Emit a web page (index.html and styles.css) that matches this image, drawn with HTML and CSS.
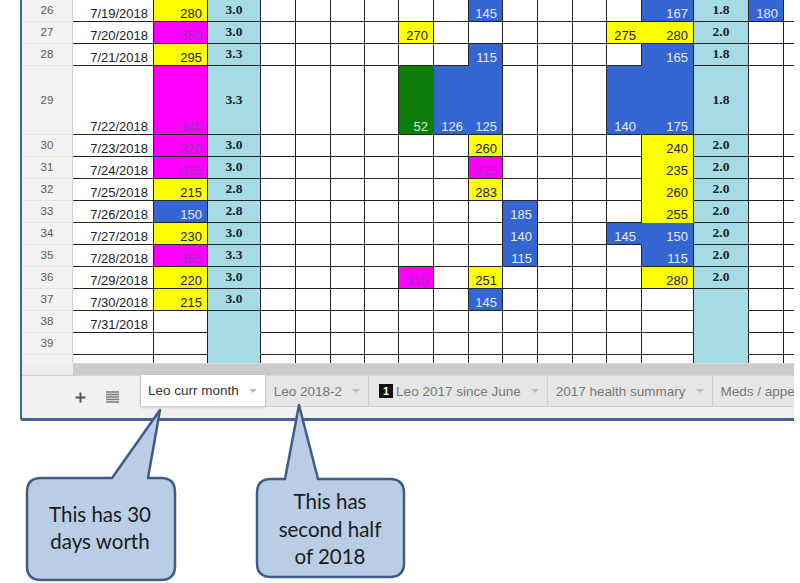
FILE: index.html
```html
<!DOCTYPE html>
<html lang="en">
<head>
    <meta charset="UTF-8">
    <meta name="viewport" content="width=device-width, initial-scale=1.0">
    <title>Leo curr month</title>
    <link rel="stylesheet" href="styles.css">
</head>
<body>
<div class="sheet">
    <div class="grid">
        <!-- 26 -->
        <div class="c h">26</div><div class="c">7/19/2018</div><div class="c y">280</div><div class="c lb">3.0</div>
        <div class="c"></div><div class="c"></div><div class="c"></div><div class="c"></div><div class="c"></div><div class="c"></div>
        <div class="c b">145</div><div class="c"></div><div class="c"></div><div class="c"></div><div class="c"></div>
        <div class="c b">167</div><div class="c lb">1.8</div><div class="c b">180</div><div class="c"></div>
        <!-- 27 -->
        <div class="c h">27</div><div class="c">7/20/2018</div><div class="c m">350</div><div class="c lb">3.0</div>
        <div class="c"></div><div class="c"></div><div class="c"></div><div class="c"></div><div class="c y">270</div><div class="c"></div>
        <div class="c"></div><div class="c"></div><div class="c"></div><div class="c"></div><div class="c y nr">275</div>
        <div class="c y">280</div><div class="c lb">2.0</div><div class="c"></div><div class="c"></div>
        <!-- 28 -->
        <div class="c h">28</div><div class="c">7/21/2018</div><div class="c y">295</div><div class="c lb">3.3</div>
        <div class="c"></div><div class="c"></div><div class="c"></div><div class="c"></div><div class="c"></div><div class="c"></div>
        <div class="c b nb">115</div><div class="c"></div><div class="c"></div><div class="c"></div><div class="c"></div>
        <div class="c b nb">165</div><div class="c lb">1.8</div><div class="c"></div><div class="c"></div>
        <!-- 29 -->
        <div class="c h">29</div><div class="c">7/22/2018</div><div class="c m">340</div><div class="c lb">3.3</div>
        <div class="c"></div><div class="c"></div><div class="c"></div><div class="c"></div><div class="c g nr">52</div><div class="c b nr">126</div>
        <div class="c b">125</div><div class="c"></div><div class="c"></div><div class="c"></div><div class="c b nr">140</div>
        <div class="c b">175</div><div class="c lb">1.8</div><div class="c"></div><div class="c"></div>
        <!-- 30 -->
        <div class="c h">30</div><div class="c">7/23/2018</div><div class="c m">320</div><div class="c lb">3.0</div>
        <div class="c"></div><div class="c"></div><div class="c"></div><div class="c"></div><div class="c"></div><div class="c"></div>
        <div class="c y">260</div><div class="c"></div><div class="c"></div><div class="c"></div><div class="c"></div>
        <div class="c y nb">240</div><div class="c lb">2.0</div><div class="c"></div><div class="c"></div>
        <!-- 31 -->
        <div class="c h">31</div><div class="c">7/24/2018</div><div class="c m">325</div><div class="c lb">3.0</div>
        <div class="c"></div><div class="c"></div><div class="c"></div><div class="c"></div><div class="c"></div><div class="c"></div>
        <div class="c m">325</div><div class="c"></div><div class="c"></div><div class="c"></div><div class="c"></div>
        <div class="c y nb">235</div><div class="c lb">2.0</div><div class="c"></div><div class="c"></div>
        <!-- 32 -->
        <div class="c h">32</div><div class="c">7/25/2018</div><div class="c y">215</div><div class="c lb">2.8</div>
        <div class="c"></div><div class="c"></div><div class="c"></div><div class="c"></div><div class="c"></div><div class="c"></div>
        <div class="c y">283</div><div class="c"></div><div class="c"></div><div class="c"></div><div class="c"></div>
        <div class="c y nb">260</div><div class="c lb">2.0</div><div class="c"></div><div class="c"></div>
        <!-- 33 -->
        <div class="c h">33</div><div class="c">7/26/2018</div><div class="c b">150</div><div class="c lb">2.8</div>
        <div class="c"></div><div class="c"></div><div class="c"></div><div class="c"></div><div class="c"></div><div class="c"></div>
        <div class="c"></div><div class="c b nb">185</div><div class="c"></div><div class="c"></div><div class="c"></div>
        <div class="c y nb">255</div><div class="c lb">2.0</div><div class="c"></div><div class="c"></div>
        <!-- 34 -->
        <div class="c h">34</div><div class="c">7/27/2018</div><div class="c y">230</div><div class="c lb">3.0</div>
        <div class="c"></div><div class="c"></div><div class="c"></div><div class="c"></div><div class="c"></div><div class="c"></div>
        <div class="c"></div><div class="c b nb">140</div><div class="c"></div><div class="c"></div><div class="c b nr">145</div>
        <div class="c b nb">150</div><div class="c lb">2.0</div><div class="c"></div><div class="c"></div>
        <!-- 35 -->
        <div class="c h">35</div><div class="c">7/28/2018</div><div class="c m">365</div><div class="c lb">3.3</div>
        <div class="c"></div><div class="c"></div><div class="c"></div><div class="c"></div><div class="c"></div><div class="c"></div>
        <div class="c"></div><div class="c b">115</div><div class="c"></div><div class="c"></div><div class="c"></div>
        <div class="c b">115</div><div class="c lb">2.0</div><div class="c"></div><div class="c"></div>
        <!-- 36 -->
        <div class="c h">36</div><div class="c">7/29/2018</div><div class="c y">220</div><div class="c lb">3.0</div>
        <div class="c"></div><div class="c"></div><div class="c"></div><div class="c"></div><div class="c m">310</div><div class="c"></div>
        <div class="c y">251</div><div class="c"></div><div class="c"></div><div class="c"></div><div class="c"></div>
        <div class="c y">280</div><div class="c lb">2.0</div><div class="c"></div><div class="c"></div>
        <!-- 37 -->
        <div class="c h">37</div><div class="c">7/30/2018</div><div class="c y">215</div><div class="c lb">3.0</div>
        <div class="c"></div><div class="c"></div><div class="c"></div><div class="c"></div><div class="c"></div><div class="c"></div>
        <div class="c b">145</div><div class="c"></div><div class="c"></div><div class="c"></div><div class="c"></div>
        <div class="c"></div><div class="c lb open"></div><div class="c"></div><div class="c"></div>
        <!-- 38 -->
        <div class="c h">38</div><div class="c">7/31/2018</div><div class="c"></div><div class="c lb open"></div>
        <div class="c"></div><div class="c"></div><div class="c"></div><div class="c"></div><div class="c"></div><div class="c"></div>
        <div class="c"></div><div class="c"></div><div class="c"></div><div class="c"></div><div class="c"></div>
        <div class="c"></div><div class="c lb open"></div><div class="c"></div><div class="c"></div>
        <!-- 39 -->
        <div class="c h">39</div><div class="c"></div><div class="c"></div><div class="c lb open"></div>
        <div class="c"></div><div class="c"></div><div class="c"></div><div class="c"></div><div class="c"></div><div class="c"></div>
        <div class="c"></div><div class="c"></div><div class="c"></div><div class="c"></div><div class="c"></div>
        <div class="c"></div><div class="c lb open"></div><div class="c"></div><div class="c"></div>
        <!-- 40, cut off by the scrollbar -->
        <div class="c h"></div><div class="c"></div><div class="c"></div><div class="c lb"></div>
        <div class="c"></div><div class="c"></div><div class="c"></div><div class="c"></div><div class="c"></div><div class="c"></div>
        <div class="c"></div><div class="c"></div><div class="c"></div><div class="c"></div><div class="c"></div>
        <div class="c"></div><div class="c lb"></div><div class="c"></div><div class="c"></div>
    </div>

    <div class="hscroll">
        <div class="hscroll-corner"></div>
        <div class="hscroll-bar"></div>
    </div>

    <div class="tabbar">
        <div class="tab-tools">
            <svg class="tool-icon" width="11" height="11" viewBox="0 0 11 11">
                <path d="M5.5 0.5v10M0.5 5.5h10" stroke="#555" stroke-width="2" fill="none"/>
            </svg>
            <svg class="tool-icon" width="13" height="12" viewBox="0 0 13 12">
                <path d="M0 1h13M0 3.5h13M0 6h13M0 8.5h13M0 11h13" stroke="#777" stroke-width="1.4" fill="none"/>
            </svg>
        </div>
        <div class="tab active">Leo curr month<span class="caret"></span></div>
        <div class="tab">Leo 2018-2<span class="caret"></span></div>
        <div class="tab tab-badge"><span class="badge">1</span>Leo 2017 since June<span class="caret"></span></div>
        <div class="tab">2017 health summary<span class="caret"></span></div>
        <div class="tab tab-last">Meds / appe</div>
    </div>
</div>

<div class="notes">
    <svg width="800" height="583" viewBox="0 0 800 583">
        <path class="bubble" d="M41 478 L112 478 L160 410 L148 478 L161 478 Q175 478 175 492 L175 566 Q175 580 161 580 L41 580 Q27 580 27 566 L27 492 Q27 478 41 478 Z"/>
        <path class="bubble" d="M271 479 L285 479 L299 405 L318 479 L390 479 Q404 479 404 493 L404 563 Q404 577 390 577 L271 577 Q257 577 257 563 L257 493 Q257 479 271 479 Z"/>
        <text class="note-text" x="100" y="522">This has 30</text>
        <text class="note-text" x="100" y="549">days worth</text>
        <text class="note-text" x="330" y="509">This has</text>
        <text class="note-text" x="330" y="537">second half</text>
        <text class="note-text" x="330" y="564">of 2018</text>
    </svg>
</div>
</body>
</html>
```

FILE: styles.css
```css
html, body {
    margin: 0;
    padding: 0;
    background: #fff;
}

body {
    position: relative;
    width: 800px;
    height: 583px;
    overflow: hidden;
    font-family: "Liberation Sans", Arial, sans-serif;
}

.sheet {
    margin-left: 20px;
    width: 774px;
    box-sizing: border-box;
    border-left: 2px solid #44649a;
    border-bottom: 3px solid #44649a;
    border-bottom-left-radius: 3px;
    overflow: hidden;
}

/* cell grid */
.grid {
    display: grid;
    grid-template-columns: 51px 81px 54px 53px 35px 35px 34px 34px 35px 35px 34px 35px 35px 34px 35px 52px 55px 35px 10px;
    grid-template-rows: 22px 22px 22px 69px repeat(10, 22px) 8px;
}

.c {
    box-sizing: border-box;
    border-right: 1px solid #222;
    border-bottom: 1px solid #222;
    display: flex;
    align-items: flex-end;
    justify-content: flex-end;
    padding: 0 5px 0 0;
    font-size: 13px;
    line-height: 15px;
    color: #222;
    white-space: nowrap;
    overflow: hidden;
}

.grid > .c:nth-child(19n) {
    border-right: 0;
}

.grid > .c:nth-last-child(-n+19) {
    border-bottom: 0;
}

.h {
    background: #f3f3f3;
    color: #5a5a5a;
    font-size: 11.5px;
    justify-content: center;
    align-items: center;
    padding: 0;
    border-right-color: #cfcfcf;
    border-bottom-color: #e6e6e6;
}

.lb {
    background: #a6dbe5;
    justify-content: center;
    align-items: center;
    padding: 0 0 2px;
    font-family: "Liberation Serif", "Times New Roman", serif;
    font-weight: bold;
    font-size: 13.5px;
}

.open {
    border-bottom-color: transparent;
}

.y { background: #ffff00; color: #222; }
.m { background: #ff00ff; color: #9436ad; }
.b { background: #3465d0; color: #e4ebff; }
.g { background: #0c7e0c; color: #d4ecd4; }

/* hide the line between cells of one coloured block */
.nr { border-right-color: transparent; }
.nb { border-bottom-color: transparent; }

/* horizontal scrollbar */
.hscroll {
    display: flex;
    height: 12px;
}

.hscroll-corner {
    width: 51px;
    background: #eeeeee;
}

.hscroll-bar {
    flex: 1;
    background: #cbcbcb;
    border-top: 1px solid #d9d9d9;
}

/* sheet tabs */
.tabbar {
    display: flex;
    height: 43px;
    background: #f1f1f1;
    border-top: 1px solid #d4d4d4;
    box-sizing: border-box;
}

.tab-tools {
    width: 118px;
    flex: none;
    display: flex;
    align-items: center;
    gap: 20px;
    padding: 0 20px 0 53px;
    box-sizing: border-box;
}

.tool-icon {
    display: block;
}

.tab {
    flex: none;
    height: 30px;
    display: flex;
    align-items: center;
    padding: 0 8px;
    background: #e6e6e6;
    border-right: 1px solid #d0d0d0;
    border-bottom: 1px solid #d0d0d0;
    font-size: 13.5px;
    color: #787878;
    white-space: nowrap;
}

.tab.active {
    background: #fff;
    color: #333;
    border-left: 1px solid #c8c8c8;
    border-right: 1px solid #c8c8c8;
    margin-top: -1px;
    height: 31px;
    padding-left: 7px;
    box-shadow: 0 1px 2px rgba(0, 0, 0, 0.12);
}

.tab-badge {
    padding-left: 10px;
}

.tab-last {
    padding-right: 0;
    border-right: 0;
}

.badge {
    display: inline-flex;
    align-items: center;
    justify-content: center;
    width: 14px;
    height: 14px;
    margin-right: 3px;
    background: #111;
    color: #fff;
    font-size: 11px;
    font-weight: bold;
}

.caret {
    margin-left: 10px;
    width: 0;
    height: 0;
    border-left: 4px solid transparent;
    border-right: 4px solid transparent;
    border-top: 4px solid #bdbdbd;
}

/* callouts drawn on top of the screenshot */
.notes {
    position: absolute;
    left: 0;
    top: 0;
    pointer-events: none;
}

.notes svg {
    display: block;
}

.bubble {
    fill: #b9cde5;
    stroke: #3f5c86;
    stroke-width: 2.5;
    stroke-linejoin: round;
}

.note-text {
    font-family: Lato, "Open Sans", sans-serif;
    font-size: 20.5px;
    fill: #1b1b1b;
    text-anchor: middle;
}
```
